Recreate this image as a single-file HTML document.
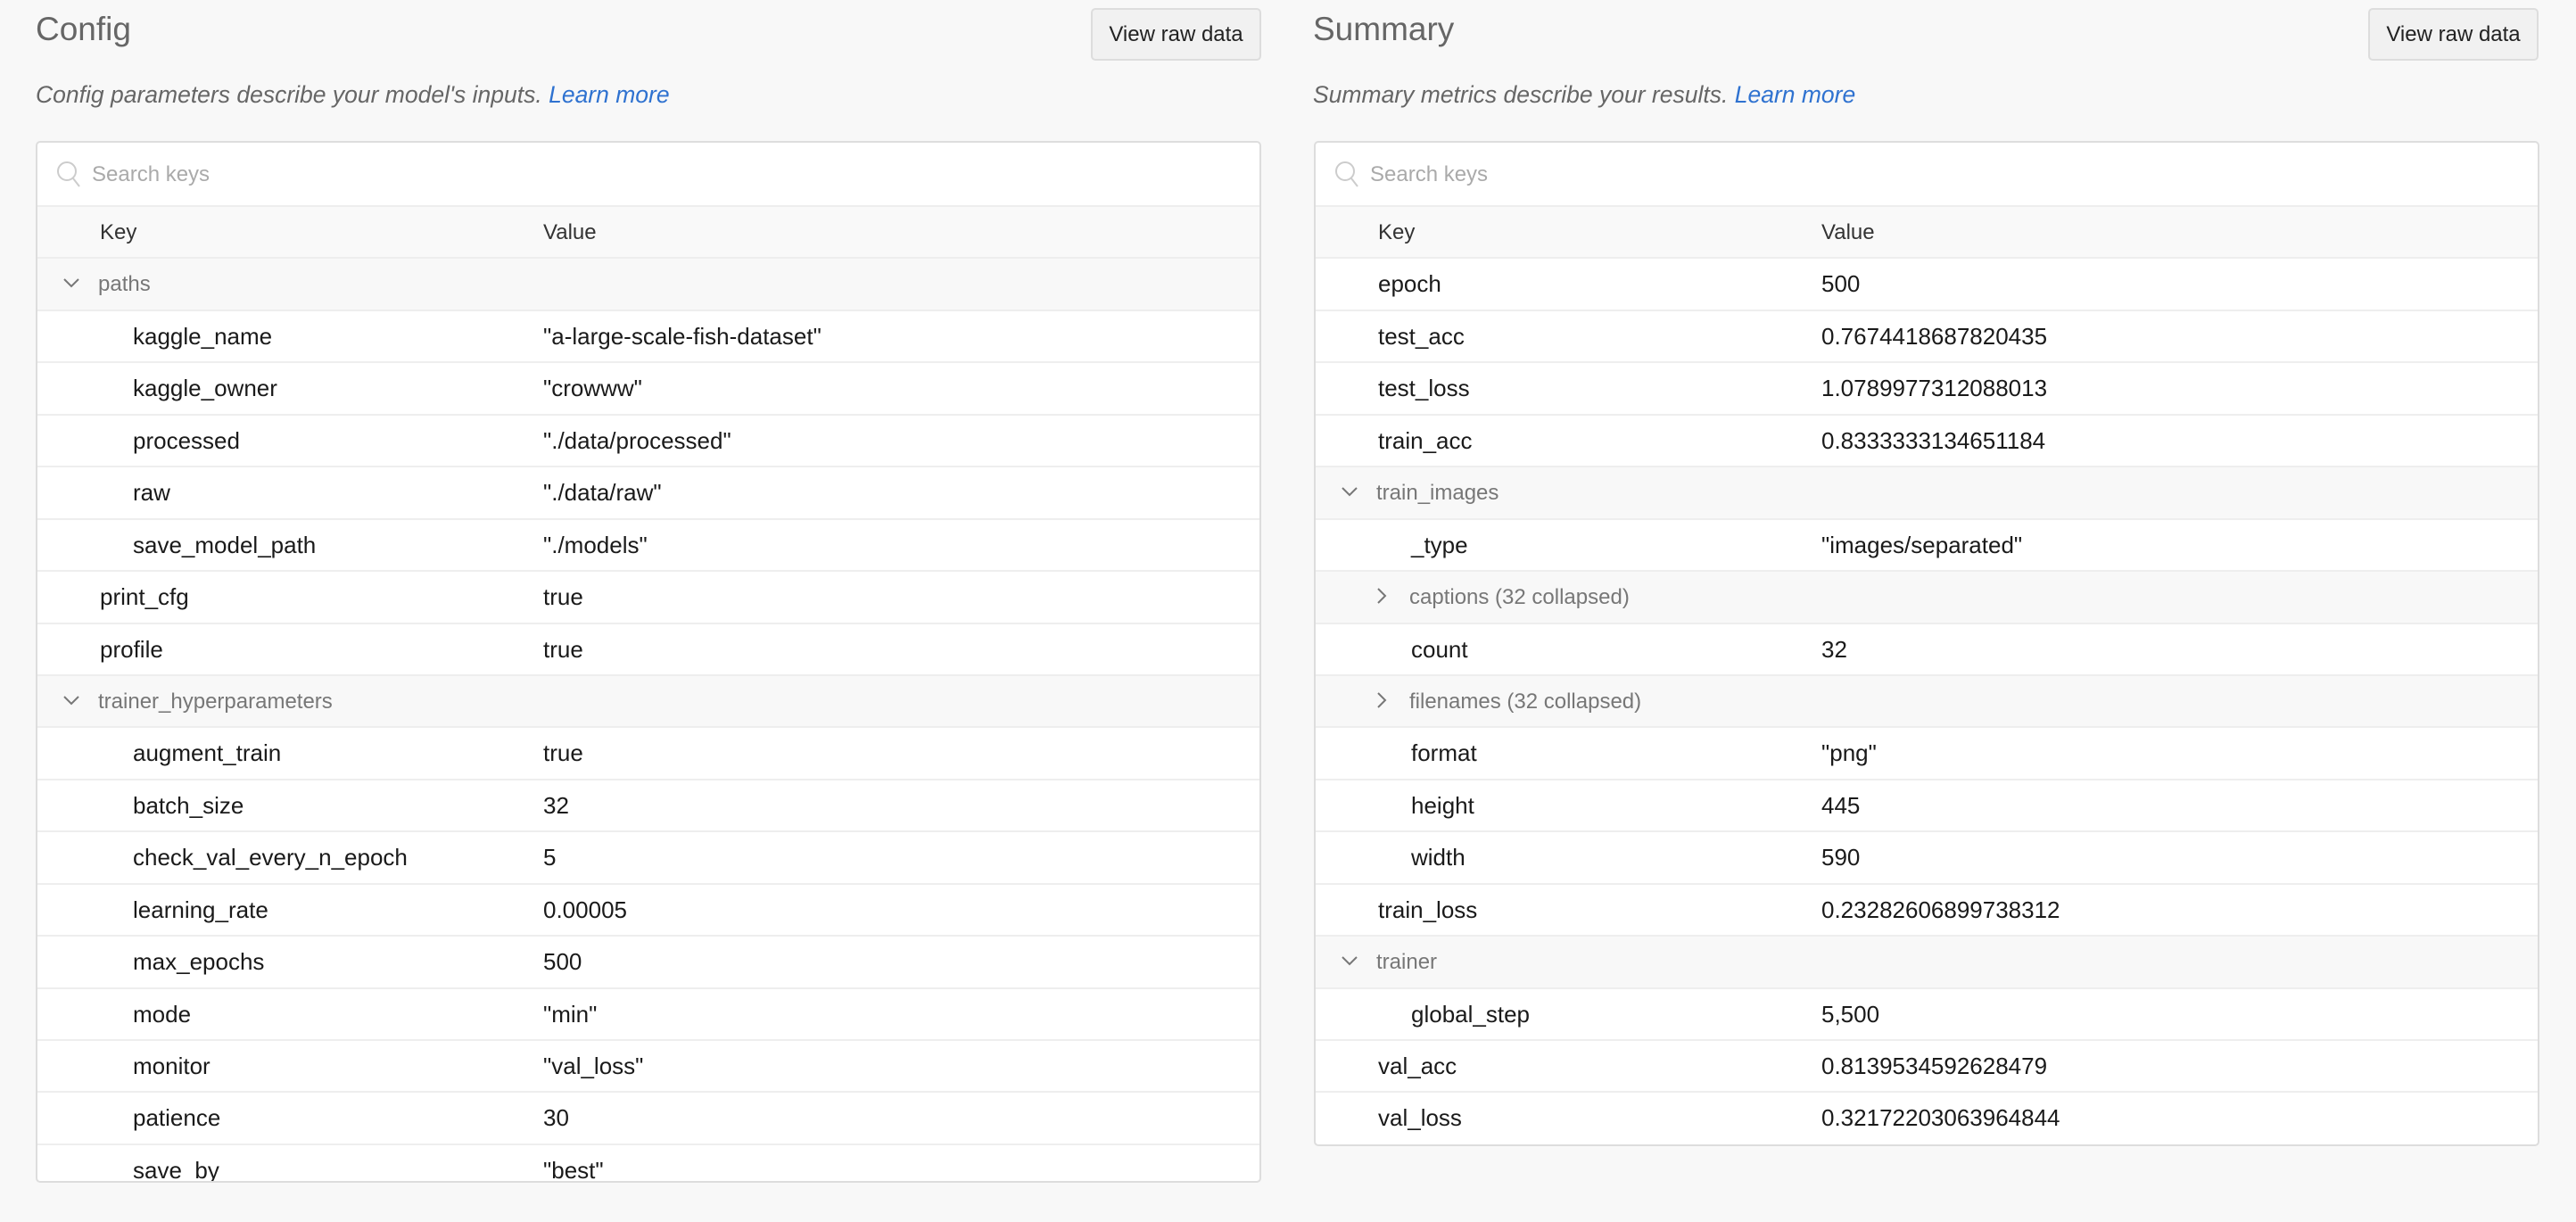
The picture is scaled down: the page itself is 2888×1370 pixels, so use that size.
<!DOCTYPE html>
<html><head><meta charset="utf-8">
<style>
*{box-sizing:border-box;margin:0;padding:0}
html,body{width:2888px;height:1370px;overflow:hidden;background:#f8f8f8;font-family:"Liberation Sans",sans-serif;color:#1a1a1a}
.col{position:absolute;top:0;width:1374px;height:1370px}
.title{position:absolute;left:0;top:12px;font-size:37px;color:#666}
.btn{position:absolute;right:0;top:9px;width:191px;height:59px;border:2px solid #ddd;border-radius:5px;background:#f1f1f1;font-size:24px;line-height:55px;text-align:center;color:#222}
.sub{position:absolute;left:0;top:91px;font-size:26.5px;font-style:italic;color:#666}
.sub a{color:#2f72d0;text-decoration:none}
.panel{position:absolute;left:0;top:158px;width:1374px;background:#fff;border:2px solid #ddd;border-radius:5px;overflow:hidden}
.search{height:72px;border-bottom:2px solid #eee;position:relative;font-size:24px;color:#aaa}
.search span{position:absolute;left:61px;top:22px}
.search svg{position:absolute;left:21px;top:20px}
.row{height:58.45px;border-bottom:2px solid #eee;position:relative;font-size:26px}
.row .k{position:absolute;left:70px;top:13px}
.row .k.n{left:107px}
.row .v{position:absolute;left:567px;top:13px}
.hd{background:#f9f9f9;font-size:24px;color:#333}
.hd .k,.hd .v{top:15px}
.g{background:#f8f8f8;font-size:24px;color:#777}
.g .k{left:68px;top:15px}
.g .k.n{left:105px}
.g svg{position:absolute;left:28px;top:20px}
.g svg.n{left:64px}
</style></head><body>

<div class="col" style="left:40px">
<div class="title">Config</div>
<div class="btn">View raw data</div>
<div class="sub">Config parameters describe your model's inputs. <a>Learn more</a></div>
<div class="panel" style="height:1168px">
<div class="search"><svg width="28" height="32" viewBox="0 0 28 32"><circle cx="12" cy="12" r="10" fill="none" stroke="#ccc" stroke-width="2"/><path d="M19 20l7 9" stroke="#ccc" stroke-width="2"/></svg><span>Search keys</span></div>
<div class="row hd"><span class="k">Key</span><span class="v">Value</span></div>
<div class="row g"><svg width="20" height="14" viewBox="0 0 20 14"><path d="M2 3l8 8 8-8" fill="none" stroke="#777" stroke-width="2"/></svg><span class="k">paths</span></div>
<div class="row"><span class="k n">kaggle_name</span><span class="v">"a-large-scale-fish-dataset"</span></div>
<div class="row"><span class="k n">kaggle_owner</span><span class="v">"crowww"</span></div>
<div class="row"><span class="k n">processed</span><span class="v">"./data/processed"</span></div>
<div class="row"><span class="k n">raw</span><span class="v">"./data/raw"</span></div>
<div class="row"><span class="k n">save_model_path</span><span class="v">"./models"</span></div>
<div class="row"><span class="k">print_cfg</span><span class="v">true</span></div>
<div class="row"><span class="k">profile</span><span class="v">true</span></div>
<div class="row g"><svg width="20" height="14" viewBox="0 0 20 14"><path d="M2 3l8 8 8-8" fill="none" stroke="#777" stroke-width="2"/></svg><span class="k">trainer_hyperparameters</span></div>
<div class="row"><span class="k n">augment_train</span><span class="v">true</span></div>
<div class="row"><span class="k n">batch_size</span><span class="v">32</span></div>
<div class="row"><span class="k n">check_val_every_n_epoch</span><span class="v">5</span></div>
<div class="row"><span class="k n">learning_rate</span><span class="v">0.00005</span></div>
<div class="row"><span class="k n">max_epochs</span><span class="v">500</span></div>
<div class="row"><span class="k n">mode</span><span class="v">"min"</span></div>
<div class="row"><span class="k n">monitor</span><span class="v">"val_loss"</span></div>
<div class="row"><span class="k n">patience</span><span class="v">30</span></div>
<div class="row"><span class="k n">save_by</span><span class="v">"best"</span></div>
</div>
</div>

<div class="col" style="left:1472px">
<div class="title">Summary</div>
<div class="btn">View raw data</div>
<div class="sub">Summary metrics describe your results. <a>Learn more</a></div>
<div class="panel" style="height:1127px;left:1px">
<div class="search"><svg width="28" height="32" viewBox="0 0 28 32"><circle cx="12" cy="12" r="10" fill="none" stroke="#ccc" stroke-width="2"/><path d="M19 20l7 9" stroke="#ccc" stroke-width="2"/></svg><span>Search keys</span></div>
<div class="row hd"><span class="k">Key</span><span class="v">Value</span></div>
<div class="row"><span class="k">epoch</span><span class="v">500</span></div>
<div class="row"><span class="k">test_acc</span><span class="v">0.7674418687820435</span></div>
<div class="row"><span class="k">test_loss</span><span class="v">1.0789977312088013</span></div>
<div class="row"><span class="k">train_acc</span><span class="v">0.8333333134651184</span></div>
<div class="row g"><svg width="20" height="14" viewBox="0 0 20 14"><path d="M2 3l8 8 8-8" fill="none" stroke="#777" stroke-width="2"/></svg><span class="k">train_images</span></div>
<div class="row"><span class="k n">_type</span><span class="v">"images/separated"</span></div>
<div class="row g"><svg class="n" width="20" height="20" viewBox="0 0 20 20" style="top:17px"><path d="M6 2l8 8-8 8" fill="none" stroke="#777" stroke-width="2"/></svg><span class="k n">captions (32 collapsed)</span></div>
<div class="row"><span class="k n">count</span><span class="v">32</span></div>
<div class="row g"><svg class="n" width="20" height="20" viewBox="0 0 20 20" style="top:17px"><path d="M6 2l8 8-8 8" fill="none" stroke="#777" stroke-width="2"/></svg><span class="k n">filenames (32 collapsed)</span></div>
<div class="row"><span class="k n">format</span><span class="v">"png"</span></div>
<div class="row"><span class="k n">height</span><span class="v">445</span></div>
<div class="row"><span class="k n">width</span><span class="v">590</span></div>
<div class="row"><span class="k">train_loss</span><span class="v">0.23282606899738312</span></div>
<div class="row g"><svg width="20" height="14" viewBox="0 0 20 14"><path d="M2 3l8 8 8-8" fill="none" stroke="#777" stroke-width="2"/></svg><span class="k">trainer</span></div>
<div class="row"><span class="k n">global_step</span><span class="v">5,500</span></div>
<div class="row"><span class="k">val_acc</span><span class="v">0.8139534592628479</span></div>
<div class="row" style="border-bottom:none"><span class="k">val_loss</span><span class="v">0.32172203063964844</span></div>
</div>
</div>
</body></html>
